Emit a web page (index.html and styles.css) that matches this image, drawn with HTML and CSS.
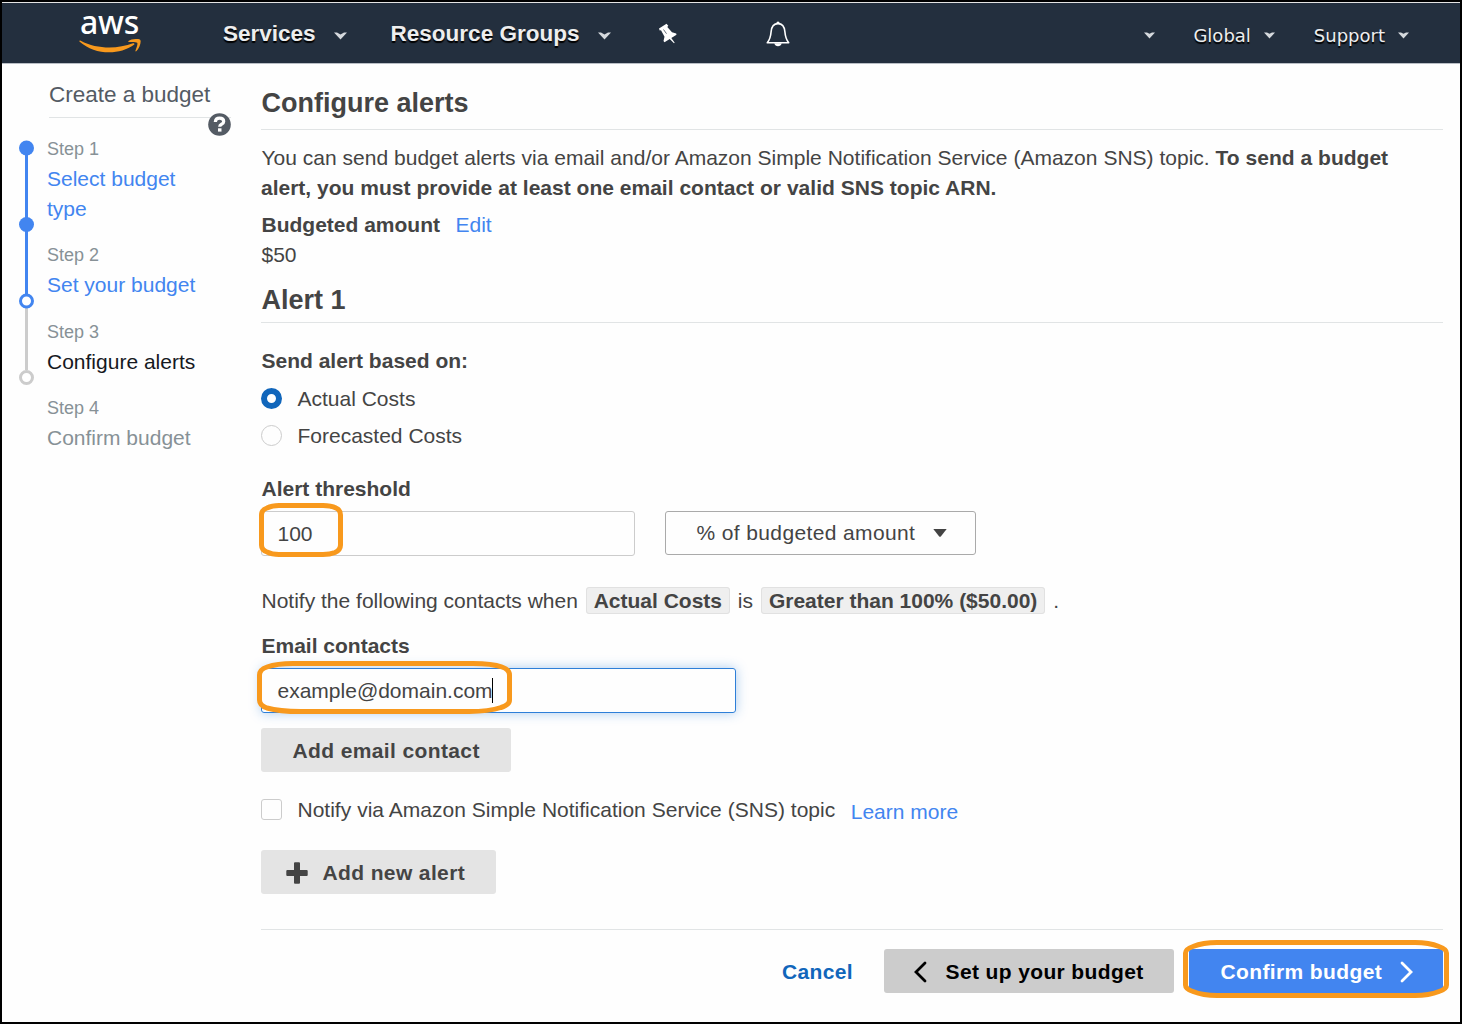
FILE: index.html
```html
<!DOCTYPE html>
<html lang="en">
<head>
<meta charset="utf-8">
<title>Create a budget</title>
<link rel="stylesheet" href="styles.css">
</head>
<body>
<div class="window">
  <header class="navbar">
    <div class="logo">
      <span class="logo-text">aws</span>
      <svg class="logo-smile" viewBox="0 0 62 15" width="62" height="15"><path d="M.4 2.400C.1 1.500.9 1.200 1.700 1.700C18 10.500 39 10 54 4.300c1.200-.5 2 .6 1 1.500C40 16.500 16 16.300.4 2.400z" fill="#f8991d"/><path d="M49.500 1.900c2.500-2 10.500-2.600 11.800-1 1.200 1.800-.8 8.400-3.800 11.200-.7.600-1.300.2-1-.6 1-2.400 2.500-6.600 1.700-7.700-.8-1-5-.9-8-.8-.9 0-1.200-.6-.7-1.100z" fill="#f8991d"/></svg>
    </div>
    <nav class="menu">
      <a class="menu-main services">Services</a>
      <svg class="caret caret-lg" viewBox="0 0 13 8"><path d="M0 0.500h3l3.500 2 3.500-2h3L6.500 7.500z"/></svg>
      <a class="menu-main groups">Resource Groups</a>
      <svg class="caret caret-lg" viewBox="0 0 13 8"><path d="M0 0.500h3l3.500 2 3.500-2h3L6.500 7.500z"/></svg>
      <svg class="pin" viewBox="0 0 20 22" width="20" height="22"><path d="M1 5.500 8.500.8l1.800 2-1 1.200 4.700 5.200 4.200 1.200.3 1.400-5.200 3.300 3.400 4.600-.7.500-4.300-4.100-5.200 3.100-1-1.300 1-4.200L3 7.300l-1.300.3z" fill="#fff"/><path d="M5.500 6.500l3 4.200" stroke="#68717d" fill="none"/></svg>
      <svg class="bell" viewBox="0 0 24 26" width="24" height="26"><path d="M12 2.600c-4.500 0-6.500 3.500-6.900 8.200-.4 5-1.300 7.900-3.800 11h21.400c-2.500-3.100-3.400-6-3.800-11C18.500 6.100 16.500 2.600 12 2.600z" fill="none" stroke="#fff" stroke-width="1.600" stroke-linejoin="round"/><path d="M10.300 2.500a1.700 2 0 0 1 3.400 0zM8.300 22.300h7.400c-.6 4-6.800 4-7.400 0z" fill="#fff"/></svg>
    </nav>
    <nav class="menu menu-right">
      <svg class="caret" viewBox="0 0 11 7"><path d="M0 .5h3l2.500 1.200L8 .5h3L5.500 6.500z"/></svg>
      <a class="menu-sub global">Global</a>
      <svg class="caret" viewBox="0 0 11 7"><path d="M0 .5h3l2.500 1.200L8 .5h3L5.500 6.500z"/></svg>
      <a class="menu-sub support">Support</a>
      <svg class="caret" viewBox="0 0 11 7"><path d="M0 .5h3l2.500 1.200L8 .5h3L5.500 6.500z"/></svg>
    </nav>
  </header>

  <div class="layout">
    <aside class="sidebar">
      <div class="side-title">Create a budget
        <svg class="help" viewBox="0 0 23 23" width="23" height="23"><circle cx="11.500" cy="11.500" r="11.300" fill="#545b64"/><path d="M7.300 9c.2-2.700 1.900-3.800 4.200-3.800 2.500 0 4.200 1.200 4.200 3.200 0 2.900-4 2.600-4 5.400" fill="none" stroke="#fff" stroke-width="3.200"/><path d="M10 15.300h3.500v3.300H10z" fill="#fff"/></svg>
      </div>
      <div class="steps">
        <svg class="track" viewBox="0 0 16 246" width="16" height="246">
          <path d="M7.500 8v154" stroke="#4285f0" stroke-width="3"/>
          <path d="M7.500 168v62" stroke="#ccc" stroke-width="3"/>
          <circle cx="7.500" cy="8" r="7.500" fill="#4285f0"/>
          <circle cx="7.500" cy="84.500" r="7.500" fill="#4285f0"/>
          <circle cx="7.500" cy="161" r="6" fill="#fff" stroke="#4285f0" stroke-width="3"/>
          <circle cx="7.500" cy="237.500" r="6" fill="#fff" stroke="#ccc" stroke-width="3"/>
        </svg>
        <ol class="step-list">
          <li><span class="step-no">Step 1</span><a class="step-link">Select budget type</a></li>
          <li><span class="step-no">Step 2</span><a class="step-link">Set your budget</a></li>
          <li><span class="step-no">Step 3</span><span class="step-now">Configure alerts</span></li>
          <li><span class="step-no">Step 4</span><span class="step-next">Confirm budget</span></li>
        </ol>
      </div>
    </aside>

    <main class="content">
      <h1>Configure alerts</h1>
      <p class="intro">You can send budget alerts via email and/or Amazon Simple Notification Service (Amazon SNS) topic. <b>To send a budget<br>alert, you must provide at least one email contact or valid SNS topic ARN.</b></p>
      <div class="amount"><b>Budgeted amount</b><a>Edit</a></div>
      <div class="amount-value">$50</div>
      <h2>Alert 1</h2>

      <div class="label based">Send alert based on:</div>
      <div class="choice"><span class="radio radio-on"></span>Actual Costs</div>
      <div class="choice second"><span class="radio"></span>Forecasted Costs</div>

      <div class="label threshold">Alert threshold</div>
      <div class="fields">
        <div class="input amount-input">100
          <svg class="mark mark-amount" viewBox="0 0 84 54" width="84" height="54"><path d="M2.500 12Q2.500 7 8 5 13 2.500 20 2.500H64Q72 2.500 77 5 81.500 7 81.500 12V42Q81.500 47 76 49.500 71 51.500 64 51.500H20Q13 51.500 8 49 2.500 47 2.500 42z"/></svg>
        </div>
        <div class="select">% of budgeted amount<svg viewBox="0 0 14 8" width="14" height="8"><path d="M.3 0h13.400L8 7.300q-1 1-2 0z" fill="#444"/></svg></div>
      </div>

      <div class="summary">Notify the following contacts when <b class="tag">Actual Costs</b> is <b class="tag">Greater than 100% ($50.00)</b> .</div>

      <div class="label email">Email contacts</div>
      <div class="input email-input">example@domain.com<span class="cursor"></span>
        <svg class="mark mark-email" viewBox="0 0 255 54" width="255" height="54"><path d="M2.500 14Q2.500 8.500 10 6 20 2.500 36 2.500H216Q235 2.500 245 6 252.500 8.500 252.500 14V39Q252.500 44 244 46.500 232 50.500 212 50.500H44Q22 50.500 10 47 2.500 44.500 2.500 39z"/></svg>
      </div>
      <div class="button add-email">Add email contact</div>
      <div class="sns"><span class="checkbox"></span><span class="sns-text">Notify via Amazon Simple Notification Service (SNS) topic</span><a>Learn more</a></div>
      <div class="button add-alert"><svg viewBox="0 0 22 22" width="22" height="22"><path d="M9 .3h4q1 0 1 1V8h6.700q1 0 1 1v4q0 1-1 1H14v6.700q0 1-1 1H9q-1 0-1-1V14H1.300q-1 0-1-1V9q0-1 1-1H8V1.300q0-1 1-1z" fill="#444"/></svg>Add new alert</div>

      <footer class="actions">
        <a class="cancel">Cancel</a>
        <div class="button back"><svg viewBox="0 0 14 22" width="14" height="22"><path d="M12 2 3 11l9 9" fill="none" stroke="#000" stroke-width="2.800" stroke-linecap="round"/></svg>Set up your budget</div>
        <div class="button confirm">Confirm budget<svg viewBox="0 0 14 22" width="14" height="22"><path d="M2 2l9 9-9 9" fill="none" stroke="#fff" stroke-width="2.800" stroke-linecap="round"/></svg>
          <svg class="mark mark-confirm" viewBox="0 0 266 58" width="266" height="58"><path d="M2.500 13Q2.500 9 10 6.500 20 2.500 34 2.500H232Q246 2.500 256 6.500 263.500 9 263.500 13V45Q263.500 49 256 51.500 246 55.500 232 55.500H34Q20 55.500 10 51.500 2.500 49 2.500 45z"/></svg>
        </div>
      </footer>
    </main>
  </div>
</div>
</body>
</html>
```
FILE: styles.css
```css
* { box-sizing: border-box; }
body {
  margin: 0;
  color: #444;
  background: #fefefe;
  font: 21px/30px "Liberation Sans", Arial, sans-serif;
}
.window { width: 1462px; height: 1024px; border: 2px solid #000; overflow: hidden; }
a { color: #4285f0; }

.navbar {
  display: flex;
  align-items: center;
  justify-content: space-between;
  height: 62px;
  border-top: 1px solid #e4e4e4;
  border-bottom: 1px solid #b9bec5;
  background: #232f3e;
}
.logo { display: flex; flex-direction: column; width: 62px; height: 44px; margin-left: 77px; }
.logo-text {
  height: 28px;
  padding-left: 1px;
  color: #fff;
  font: 500 32px/22px "Noto Sans", sans-serif;
  letter-spacing: -.2px;
}
.logo-smile { display: block; }
.menu { display: flex; align-items: center; flex: 1; height: 60px; }
.menu-main { color: #eee; font-size: 22.500px; font-weight: bold; line-height: 26px; text-shadow: 0 2px 1px #000; padding-top: 1px; }
.menu-sub { color: #eee; font: 18px/24px "DejaVu Sans", sans-serif; text-shadow: 0 2px 1px #000; padding-top: 5px; }
.caret { width: 11px; height: 7px; fill: #d5d9dd; margin-top: 4px; }
.caret-lg { width: 13px; height: 8px; margin-top: 5px; }
.services { margin: 0 18px 0 82px; }
.groups { margin: 0 19px 0 44px; }
.pin { margin: 2px 0 0 47px; }
.bell { margin: 2px 0 0 88px; }
.menu-right { flex: none; padding-right: 51px; }
.global { margin: 0 13px 0 38px; }
.support { margin: 0 13px 0 39px; }

.layout { display: flex; }
.sidebar { width: 259px; padding: 16px 30px 0 17px; }
.side-title {
  position: relative;
  height: 38px;
  margin-left: 30px;
  border-bottom: 1px solid #e1e4e5;
  color: #545b64;
  font-size: 22.500px;
}
.help { position: absolute; right: 0; top: 33px; }
.steps { display: flex; gap: 12px; padding-top: 16px; }
.track { flex: none; margin-top: 6px; }
.step-list { width: 160px; margin: 0; padding: 0; list-style: none; }
.step-list li { margin-bottom: 16.400px; }
.step-list li > * { display: block; }
.step-no { color: #879196; font-size: 18px; }
.step-now { color: #16191f; }
.step-next { color: #879196; }
.step-list li:first-child .step-link { width: 135px; }

.content { width: 1182px; padding-top: 20px; text-indent: .5px; }
h1, h2 { margin: 0; font-size: 27px; line-height: 38px; border-bottom: 1px solid #e1e4e5; }
h1 { height: 46px; }
h2 { height: 42px; margin-top: 11px; }
.intro { margin: 13px 0 7px; white-space: nowrap; word-spacing: .08px; }
.amount { display: flex; gap: 15px; }
.label { font-weight: bold; }
.based { margin-top: 23px; }
.choice { display: flex; gap: 15px; margin-top: 8px; }
.second { margin-top: 7px; }
.radio { width: 21px; height: 21px; margin-top: 4px; border: 1px solid #ccc; border-radius: 50%; }
.radio-on { border: 6.500px solid #1166bb; }
.threshold { margin-top: 23px; }
.fields { display: flex; gap: 30px; margin-top: 7px; }
.input {
  position: relative;
  display: flex;
  align-items: center;
  height: 45px;
  padding-left: 15px;
  border: 1px solid #ccc;
  border-radius: 3px;
}
.amount-input { width: 374px; }
.select {
  display: flex;
  align-items: center;
  gap: 18px;
  width: 311px;
  height: 44px;
  padding-left: 30px;
  border: 1px solid #aaa;
  border-radius: 3px;
  letter-spacing: .375px;
}
.mark { position: absolute; fill: none; stroke: #f8991d; stroke-width: 5; }
.mark-amount { left: -3px; top: -9px; }
.mark-email { left: -5px; top: -8px; }
.mark-confirm { left: -6px; top: -9px; }
.summary { margin-top: 30px; white-space: nowrap; }
.tag { margin: 0 2px; padding: 1px 7px; border: 1px solid #e1e1e1; border-radius: 3px; background: #efefef; }
.email { margin-top: 15px; }
.email-input { width: 475px; margin-top: 7px; border-color: #2e7fd8; box-shadow: 0 0 12px rgba(46, 127, 216, .4); }
.cursor { width: 1px; height: 25px; margin-left: -.5px; background: #000; }
.button {
  position: relative;
  display: flex;
  align-items: center;
  height: 44px;
  border-radius: 3px;
  background: #e4e4e4;
  font-weight: bold;
  letter-spacing: .375px;
  white-space: nowrap;
}
.add-email { width: 250px; margin-top: 15px; padding: 2px 0 0 31px; }
.sns { display: flex; height: 30px; margin-top: 23px; }
.checkbox { width: 21px; height: 21px; margin: 4px 15px 0 0; border: 1px solid #ccc; border-radius: 3px; }
.sns-text { word-spacing: .12px; }
.sns a { margin: 2px 0 0 15px; }
.add-alert { width: 235px; margin-top: 25px; padding: 1px 0 0 25px; gap: 14px; }
.actions {
  display: flex;
  justify-content: flex-end;
  height: 64px;
  margin-top: 35px;
  border-top: 1px solid #e1e4e5;
  padding-top: 19px;
}
.cancel { margin-right: 31px; color: #1166bb; font-weight: bold; line-height: 46px; letter-spacing: .375px; }
.back { width: 290px; padding: 1px 0 0 29px; gap: 18px; background: #ccc; color: #000; }
.confirm { width: 254px; margin-left: 15px; padding: 1px 0 0 31px; gap: 18px; background: #4285f0; color: #fff; }
```
